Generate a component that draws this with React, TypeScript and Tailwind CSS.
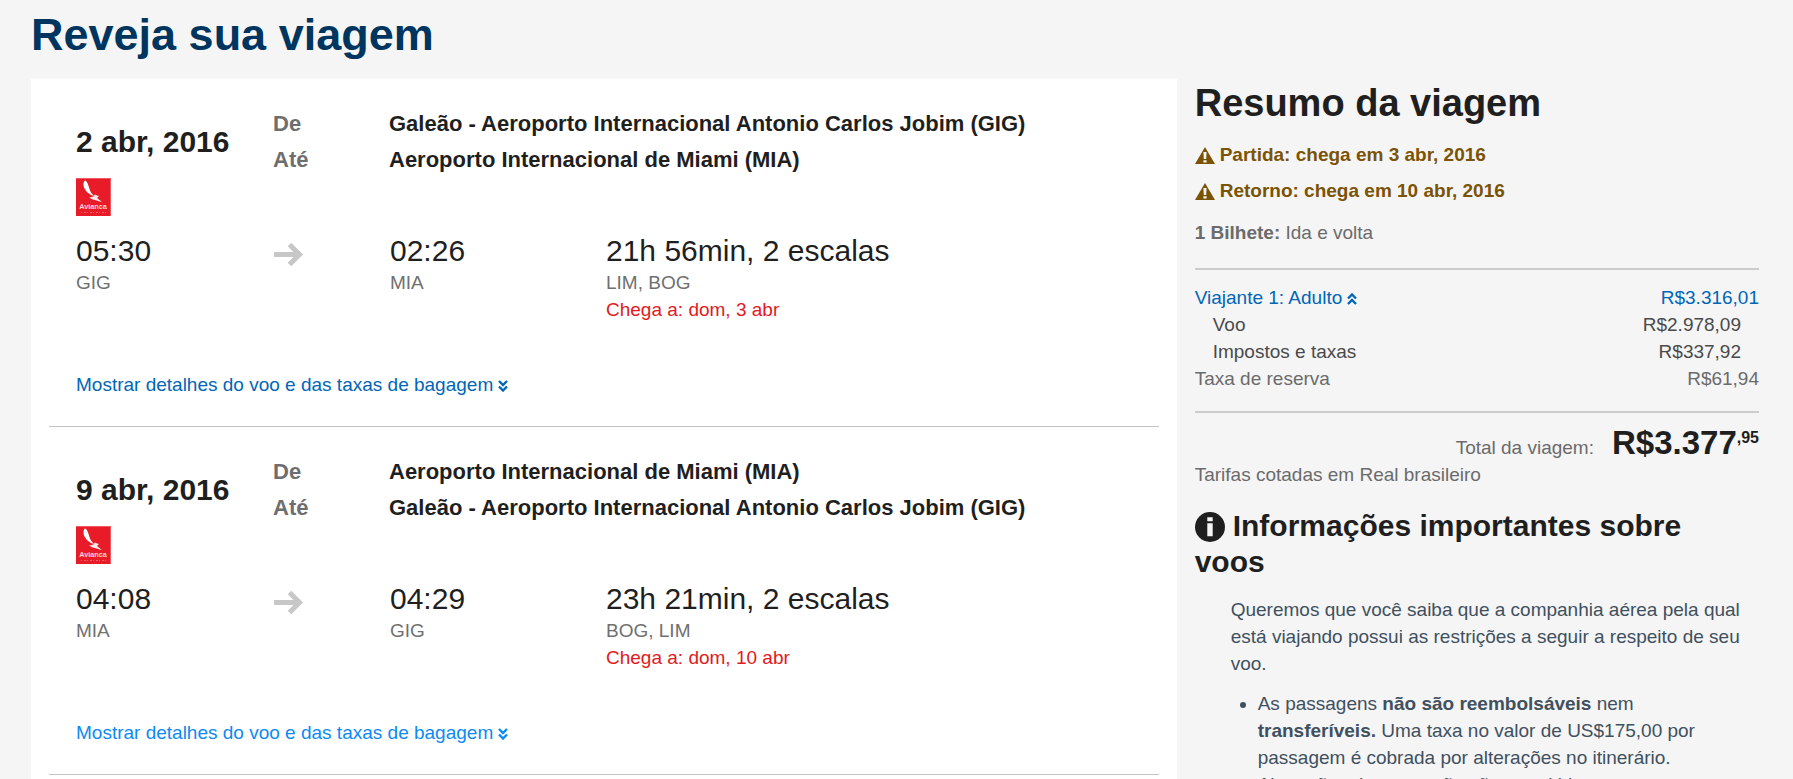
import type { ReactNode } from 'react';

type Flight = {
  date: string;
  from: string;
  to: string;
  departure: string;
  departureCode: string;
  arrival: string;
  arrivalCode: string;
  duration: string;
  stops: string;
  arrivesOn: string;
  linkClass: string;
};

const flights: Flight[] = [
  {
    date: '2 abr, 2016',
    from: 'Galeão - Aeroporto Internacional Antonio Carlos Jobim (GIG)',
    to: 'Aeroporto Internacional de Miami (MIA)',
    departure: '05:30',
    departureCode: 'GIG',
    arrival: '02:26',
    arrivalCode: 'MIA',
    duration: '21h 56min, 2 escalas',
    stops: 'LIM, BOG',
    arrivesOn: 'Chega a: dom, 3 abr',
    linkClass: 'text-[#0066b8]',
  },
  {
    date: '9 abr, 2016',
    from: 'Aeroporto Internacional de Miami (MIA)',
    to: 'Galeão - Aeroporto Internacional Antonio Carlos Jobim (GIG)',
    departure: '04:08',
    departureCode: 'MIA',
    arrival: '04:29',
    arrivalCode: 'GIG',
    duration: '23h 21min, 2 escalas',
    stops: 'BOG, LIM',
    arrivesOn: 'Chega a: dom, 10 abr',
    linkClass: 'text-[#0c8af5]',
  },
];

function AirlineLogo() {
  return (
    <svg viewBox="0 0 35 38" className="h-[38px] w-[35px]" role="img" aria-label="Avianca">
      <rect width="35" height="38" fill="#ef5a62" />
      <rect x="0" y="1" width="34" height="37" fill="#e81c28" />
      <path d="M9 2.500c2.500 1 3.500 5 5 10 1 3 3 4 4 5.500-4-1-8-4-10-8.500-1-3-.5-6 1-7z" fill="#fff" />
      <path d="M13 19.500c3 0 5-1 6-3 1 1 3 1 4 1.500l-2 2 5 4c-3-1-5-1-7-2-2 0-4-1.500-6-2.500z" fill="#fff" opacity=".9" />
      <text x="17" y="31" textAnchor="middle" fontFamily="Liberation Sans, sans-serif" fontWeight="700" fontSize="7.300" fill="#fbd5d7">
        Avianca
      </text>
      <path d="M5 34.500h25" stroke="#f0656d" strokeWidth="1" strokeDasharray="1 2 2 1" />
    </svg>
  );
}

function Arrow() {
  return (
    <svg viewBox="0 0 30 25" className="h-[25px] w-[30px]" aria-hidden="true">
      <path d="M0 12.500h25M15.500 2.500l10 10-10 10" fill="none" stroke="#c7c7c7" strokeWidth="5" />
    </svg>
  );
}

function DoubleChevron({ up = false }: { up?: boolean }) {
  return (
    <svg viewBox="0 0 10 12" className="ml-[5px] inline-block h-3 w-2.5" aria-hidden="true">
      <path
        d={up ? 'M1 5.500l4-4 4 4M1 11l4-4 4 4' : 'M1 1l4 4 4-4M1 6.500l4 4 4-4'}
        fill="none"
        stroke="currentColor"
        strokeWidth="2.400"
      />
    </svg>
  );
}

function FlightCard({ flight }: { flight: Flight }) {
  return (
    <section className="mx-[18px] border-b border-[#c4c4c4] px-[27px] pt-[27px] pb-7">
      <div className="grid grid-cols-[197px_1fr]">
        <div>
          <h2 className="mt-4 text-[30px] leading-[40px] font-bold">{flight.date}</h2>
          <div className="mt-4">
            <AirlineLogo />
          </div>
        </div>
        <dl className="grid auto-rows-[36px] grid-cols-[116px_1fr] content-start text-[22px] leading-[36px] font-bold">
          <dt className="text-[#6e6e6e]">De</dt>
          <dd>{flight.from}</dd>
          <dt className="text-[#6e6e6e]">Até</dt>
          <dd>{flight.to}</dd>
        </dl>
      </div>
      <div className="mt-[17px] grid grid-cols-[198px_116px_216px_1fr] pb-12 text-[19px] leading-[27px] text-[#707070]">
        <div>
          <p className="text-[30px] leading-[36px] text-[#1f1f1f]">{flight.departure}</p>
          <p>{flight.departureCode}</p>
        </div>
        <div className="pt-[9px]">
          <Arrow />
        </div>
        <div>
          <p className="text-[30px] leading-[36px] text-[#1f1f1f]">{flight.arrival}</p>
          <p>{flight.arrivalCode}</p>
        </div>
        <div>
          <p className="text-[30px] leading-[36px] text-[#1f1f1f]">{flight.duration}</p>
          <p>{flight.stops}</p>
          <p className="text-[#e21a22]">{flight.arrivesOn}</p>
        </div>
      </div>
      <button type="button" className={`block text-[19px] leading-[27px] ${flight.linkClass}`}>
        Mostrar detalhes do voo e das taxas de bagagem
        <DoubleChevron />
      </button>
    </section>
  );
}

function Warning({ children }: { children: ReactNode }) {
  return (
    <p className="flex items-center gap-[5px] text-[19px] leading-[36px] font-bold text-[#7b5305]">
      <svg viewBox="0 0 20 17" className="h-[17px] w-5" aria-hidden="true">
        <path d="M10 0l10 17H0z" fill="currentColor" />
        <path d="M8.400 5h3.200l-.4 7H8.800zM8.400 13.200h3.200v2.400H8.400z" fill="#f5f5f5" />
      </svg>
      {children}
    </p>
  );
}

function Summary() {
  return (
    <aside className="text-[19px] leading-[27px] text-[#6b6b6b]">
      <h2 className="text-[38px] leading-[48px] font-bold text-[#1f1f1f]">Resumo da viagem</h2>
      <div className="mt-2.5">
        <Warning>Partida: chega em 3 abr, 2016</Warning>
        <Warning>Retorno: chega em 10 abr, 2016</Warning>
      </div>
      <p className="mt-2.5">
        <strong>1 Bilhete:</strong> Ida e volta
      </p>
      <table className="mt-[22px] w-full border-y-2 border-[#cccccc]">
        <tbody>
          <tr className="text-[#0066b8]">
            <th scope="row" className="pt-3.5 text-left font-normal">
              <button type="button">
                Viajante 1: Adulto
                <DoubleChevron up />
              </button>
            </th>
            <td className="pt-3.5 text-right">R$3.316,01</td>
          </tr>
          <tr className="text-[#4a4a4a]">
            <th scope="row" className="pl-[18px] text-left font-normal">Voo</th>
            <td className="pr-[18px] text-right">R$2.978,09</td>
          </tr>
          <tr className="text-[#4a4a4a]">
            <th scope="row" className="pl-[18px] text-left font-normal">Impostos e taxas</th>
            <td className="pr-[18px] text-right">R$337,92</td>
          </tr>
          <tr>
            <th scope="row" className="pb-[19px] text-left font-normal">Taxa de reserva</th>
            <td className="pb-[19px] text-right">R$61,94</td>
          </tr>
        </tbody>
      </table>
      <div className="mt-3 flex items-baseline justify-end gap-[18px]">
        <span>Total da viagem:</span>
        <strong className="flex items-start text-[33px] leading-[36px] text-[#1f1f1f]">
          R$3.377<span className="text-[16px] leading-[26px]">,95</span>
        </strong>
      </div>
      <p>Tarifas cotadas em Real brasileiro</p>
      <h3 className="mt-5 text-[30px] leading-[36px] font-bold text-[#1f1f1f]">
        <svg viewBox="0 0 30 30" className="mr-2 inline-block size-[30px] align-[-6px]" aria-hidden="true">
          <circle cx="15" cy="15" r="15" fill="currentColor" />
          <path d="M12.300 5.200h5.400v4h-5.400zM12.300 11.200h5.400v13h-5.400z" fill="#f5f5f5" />
        </svg>
        Informações importantes sobre voos
      </h3>
      <div className="pl-9 text-[#40505e]">
        <p className="mt-4">
          Queremos que você saiba que a companhia aérea pela qual está viajando possui as restrições a seguir a respeito de seu voo.
        </p>
        <ul className="mt-[13px] list-disc pr-9 pl-[27px]">
          <li>
            As passagens <strong>não são reembolsáveis</strong> nem <strong>transferíveis.</strong> Uma taxa no valor de
            US$175,00 por passagem é cobrada por alterações no itinerário. Alterações de nome não são permitidas.
          </li>
        </ul>
      </div>
    </aside>
  );
}

export default function App() {
  return (
    <main className="h-screen overflow-hidden bg-[#f5f5f5] pr-[34px] pl-[31px] font-['Liberation_Sans',Arial,sans-serif] text-[#1f1f1f]">
      <h1 className="pt-2 text-[45px] leading-[54px] font-bold text-[#00355f]">Reveja sua viagem</h1>
      <div className="mt-[17px] grid grid-cols-[67fr_33fr] gap-[18px]">
        <div className="min-h-screen bg-white">
          {flights.map((flight) => (
            <FlightCard key={flight.date} flight={flight} />
          ))}
        </div>
        <Summary />
      </div>
    </main>
  );
}
